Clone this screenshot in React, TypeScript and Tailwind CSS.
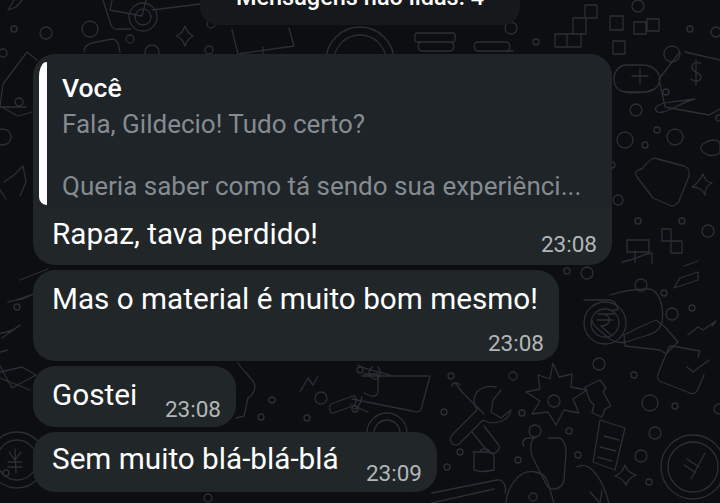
const circles: [number, number, number][] = [
  // top left
  [14, 29, 3], [46, 33, 6], [90, 29, 8], [130, 39, 4], [211, 24, 4], [209, 50, 4], [152, 52, 7],
  [3, 53, 4], [3, 137, 8], [6, 473, 3],
  // top right
  [511, 28, 6], [536, 42, 3], [638, 6, 6], [690, 29, 3], [716, 32, 5], [672, 54, 8], [666, 92, 3],
  [636, 110, 6], [657, 130, 3], [625, 140, 8], [675, 137, 8], [645, 145, 3], [719, 118, 3],
  [618, 200, 5], [638, 221, 3], [682, 221, 3], [708, 231, 6], [612, 165, 3],
  // middle right
  [567, 271, 3], [587, 273, 6], [641, 285, 6], [664, 293, 3], [672, 314, 6], [692, 308, 3],
  [599, 364, 6], [634, 375, 3], [513, 376, 4], [451, 376, 3], [650, 403, 8], [675, 406, 3],
  [554, 401, 6], [719, 409, 5], [444, 412, 3], [522, 413, 3], [535, 431, 6], [569, 431, 3],
  [655, 433, 6], [460, 452, 3], [518, 460, 3], [578, 455, 3], [641, 456, 6], [447, 467, 3],
  [649, 482, 3], [533, 497, 4],
  // between the short bubbles
  [272, 400, 3], [321, 398, 6], [307, 418, 3], [261, 417, 3], [355, 409, 3], [17, 307, 3],
  [360, 370, 3], [208, 498, 4],
];

const lines: string[] = [
  // camera at the top
  "M112 0l-2 10 32 6 4-16",
  "M103 0l8 25c2 4 4 5 8 4h12",
  "M152 10l48-6",
  // sparkle
  "M185 26c2 6 4 8 8 10-4 2-6 4-8 10-2-6-4-8-9-10 5-2 7-4 9-10z",
  "M14 0l-6 10 8-3 6-7",
  "M84 52c0-5 4-8 8-9l20-4c4 0 6 3 7 8l1 5",
  "M232 30l6 24 56-8-5-18",
  "M263 47v7",
  // stacked pills and tetris blocks
  "M417 33h36c3 0 3 9 0 9h-36c-3 0-3-9 0-9zM422 42h28c5 0 5 9 0 9h-28c-5 0-5-9 0-9z",
  "M478 42h28c5 0 5 9 0 9h-28c-5 0-5-9 0-9zM487 51h26",
  "M555 34h12v13h-12zM567 34h14v13h-14zM585 5h12v13h-12zM573 18h13v16h-13zM586 18v16M610 16h13v14h-13z",
  "M634 22h12v12h-12zM647 19h12v12h-12zM613 41h12v13h-12z",
  // sticker on the right
  "M679 53l-20 26 6 28 44 8 11-6M685 52l35 8",
  "M701 64c-4-3-10-1-9 4 1 5 9 4 9 9 0 5-7 5-10 2M696 60v25",
  "M695 99c-10 2-26 12-32 13-8 2-10-4-4-7 8-4 18-3 36-6z",
  // plus button
  "M626 65h16c14 0 18 11 18 13 0 8-6 14-16 14h-18c-8 0-12-6-12-13 0-8 6-14 12-14z",
  "M640 69v15M632 76h16M620 90c6 4 26 4 36-2",
  // heart and mitten shape
  "M705 143c6-5 15-3 15 1v9c-3 2-8 3-12 2-10-4-8-10-3-12z",
  "M654 158l30 8c6 2 6 6 5 10l-10 25c-2 4-6 6-10 4l-16-7-16-21c-2-3-2-5 1-7l4-1c3-3 5-8 12-11z",
  "M703 174c2 6 4 8 9 9-5 2-7 5-7 12-3-6-6-8-13-8 5-3 8-7 11-13z",
  "M627 240h22v12h-22zM662 229h9v12h-9zM671 241h11v12h-11z",
  "M622 262c16-3 20-8 30-9v10",
  "M680 278l18-6v8l-24 8zM684 266l14-5M635 251v11",
  // rupee camera
  "M584 300h25c5 0 8 4 9 10l-5 0M610 295c12-4 26-6 38-6 8 0 12 8 14 18 2 14 0 24-14 28l-22 7c-10 2-16-2-22-8-4-4-12-8-12-14",
  "M597 320h16M598 314h16M602 314c10 0 10 12-1 12l11 10",
  // house tag
  "M625 345l-1-10 16-8 16-7 10 8 12 14-12 12-6-4-35-4z",
  // chart and check card
  "M688 335l10-8 5 3 13-9-4 5M712 326l4-5",
  "M672 346l28 5-2 6M672 346c-4 0-4 4-5 6l-9 22c-2 4 0 6 4 8l28 11c4 2 6 0 8-4l6-14",
  "M687 367l6 5 16-12",
  "M0 352l8-2M0 372l22-5 14 8-24 13-12-22M0 378l30 12M2 338c4-3 14-10 18-13-5 4-12 8-20 8",
  "M8 302c10-2 20-6 30-10-8 3-14 8-22 8M20 280l28-11",
  // hand, spark and pill between bubbles
  "M238 363c4 6 10 12 14 17 5 4 3 14-4 18l-4 18-8 2M300 392l8-14 5 7 5-9",
  "M331 404l22-8c4-1 4 8 0 10l-20 7c-4 1-4-7-2-9zM358 365c6 4 20 7 32 10",
  // laptop
  "M364 374l14 0v18c-2 6-6 5-14 1M430 376l-8 30c-1 6-4 7-10 5l-60-12M372 367c-4 4-4 10 2 12 6 2 8-8 4-12",
  "M428 376l-66 0M350 404l18 8M362 397c-2 8-4 12-8 12",
  // wrench and screwdriver
  "M496 387c-10-2-22 2-22 14 0 4 2 6 3 9l-24 24c-6 6 0 14 6 10l24-24c10 6 26 2 28-10l-10 8-10-6 2-12 8-10",
  "M456 384l6 8 22 22M484 426l14 18c4 6 -4 12 -10 8l-16-20M452 386c0-4 6-4 8-1",
  // starburst
  "M553 363l6 14 13-3 -1 13 16 3 -14 9 6 14 -15-3 -8 15 -8-13 -16 2 8-13 -14-9 14-3 -2-14 12 4z",
  // key
  "M600 380l6 8-3 4 8 14-6 3-3 8-10-4 2-8-4-4-5-14z",
  // doc
  "M600 420l25 8-10 42-22-8 7-42zM604 436l15 4M600 447l16 4M598 457l14 4",
  // stethoscope and sparkle
  "M524 446c-3-3 0-8 4-8h8M548 438h10c6 0 8 8 8 14l-2 28c-2 10-14 12-18 4l-14-28c-2-6-2-14 2-18",
  "M625 465c2 6 5 8 11 10-6 3-8 5-10 10-2-5-5-7-11-9 6-3 8-5 10-11z",
  // bottom
  "M473 452h16c4 0 5 3 5 6v12c-12 2-14 2-20 0v-18zM480 452c1-4 8-4 10 0",
  "M432 493l65-13c6-1 10 6 8 13M432 503l62-14M506 503c0-10 6-20 12-26 8-8 26-8 30 6l6 20",
  "M577 467c10-6 24 6 32 36M590 492l10 11M602 490l-2 13",
  // yen marks on the two compasses
  "M705 453l-14 26M687 459l12 8M684 465l12 8",
  "M15 449l1 24M9 452l6 8 6-8M8 462h14M8 467h14",
];

const rings: [number, number, number][] = [
  [143, 17, 14], [143, 17, 8], [360, 61, 34], [360, 61, 26], [605, 323, 21], [605, 323, 14],
  [693, 467, 32], [693, 467, 25], [17, 460, 28], [17, 460, 20], [387, 433, 20], [387, 433, 13],
];

function Doodles() {
  return (
    <svg viewBox="0 0 720 503" className="absolute inset-0 h-full w-full" fill="none" stroke="#2c2f33" strokeWidth="1.3" strokeLinecap="round" strokeLinejoin="round">
      {circles.map(([x, y, r], i) => <circle key={i} cx={x} cy={y} r={r} />)}
      {rings.map(([x, y, r], i) => <circle key={i} cx={x} cy={y} r={r} />)}
      {lines.map((d, i) => <path key={i} d={d} />)}
      {/* left tag */}
      <path d="M27 52l-24 32-3 22 18 10 14-4 M27 52l10 8 M0 107h26 M19 98a4 4 0 1 0 .1 0 M4 182l10-7 9-9 3 16-6 14 M0 190l6 9" />
    </svg>
  );
}

function Time({ children }: { children: string }) {
  return <span className="text-[22.5px] leading-none text-[#b2b6b8]">{children}</span>;
}

export default function App() {
  return (
    <div className="relative h-[503px] w-[720px] overflow-hidden bg-[#0c0e12] font-['Roboto',sans-serif]">
      <Doodles />
      <div className="relative flex flex-col items-start">
        <div className="mb-[29px] flex h-[25px] w-[320px] justify-center self-center overflow-hidden rounded-b-[18px] bg-[#16191c]">
          <span className="-mt-[17px] text-[23.5px] leading-[28px] font-medium whitespace-nowrap text-white">Mensagens não lidas: 4</span>
        </div>

        <div className="ml-[33px] w-[579px] rounded-[22px] bg-[#212629]">
          <div className="ml-[6px] flex h-[154px] items-stretch overflow-hidden rounded-tl-[22px] rounded-tr-[22px] bg-[#1e2428] pt-[8px]">
            <div className="mb-[3px] w-[8px] shrink-0 rounded-l-[8px] bg-white" />
            <div className="ml-[15px] min-w-0 flex-1">
              <div className="mt-[10px] text-[26.5px] leading-[32px] font-medium text-white">Você</div>
              <div className="mt-[5px] text-[26px] leading-[30px] text-[#858b90]">Fala, Gildecio! Tudo certo?</div>
              <div className="mt-[32px] text-[26px] leading-[30px] whitespace-nowrap text-[#858b90]">Queria saber como tá sendo sua experiênci...</div>
            </div>
          </div>
          <div className="flex h-[57px] justify-between pr-[15px] pl-[19px]">
            <span className="-mt-[1px] text-[29.7px] leading-[54px] text-white">Rapaz, tava perdido!</span>
            <div className="mt-[25px]"><Time>23:08</Time></div>
          </div>
        </div>

        <div className="mt-[5px] ml-[33px] flex h-[91px] w-[526px] flex-col rounded-[22px] bg-[#212629] pr-[15px] pl-[19px]">
          <span className="mt-[11px] text-[29.7px] leading-[36px] text-white">Mas o material é muito bom mesmo!</span>
          <div className="mt-[15px] self-end"><Time>23:08</Time></div>
        </div>

        <div className="mt-[5px] ml-[33px] flex h-[61px] w-[203px] justify-between rounded-[22px] bg-[#212629] pr-[15px] pl-[19px]">
          <span className="mt-[11px] text-[29.7px] leading-[36px] text-white">Gostei</span>
          <div className="mt-[32px]"><Time>23:08</Time></div>
        </div>

        <div className="mt-[5px] ml-[33px] flex h-[60px] w-[404px] justify-between rounded-[22px] bg-[#212629] pr-[15px] pl-[19px]">
          <span className="mt-[9px] text-[29.7px] leading-[36px] text-white">Sem muito blá-blá-blá</span>
          <div className="mt-[30px]"><Time>23:09</Time></div>
        </div>
      </div>
    </div>
  );
}
